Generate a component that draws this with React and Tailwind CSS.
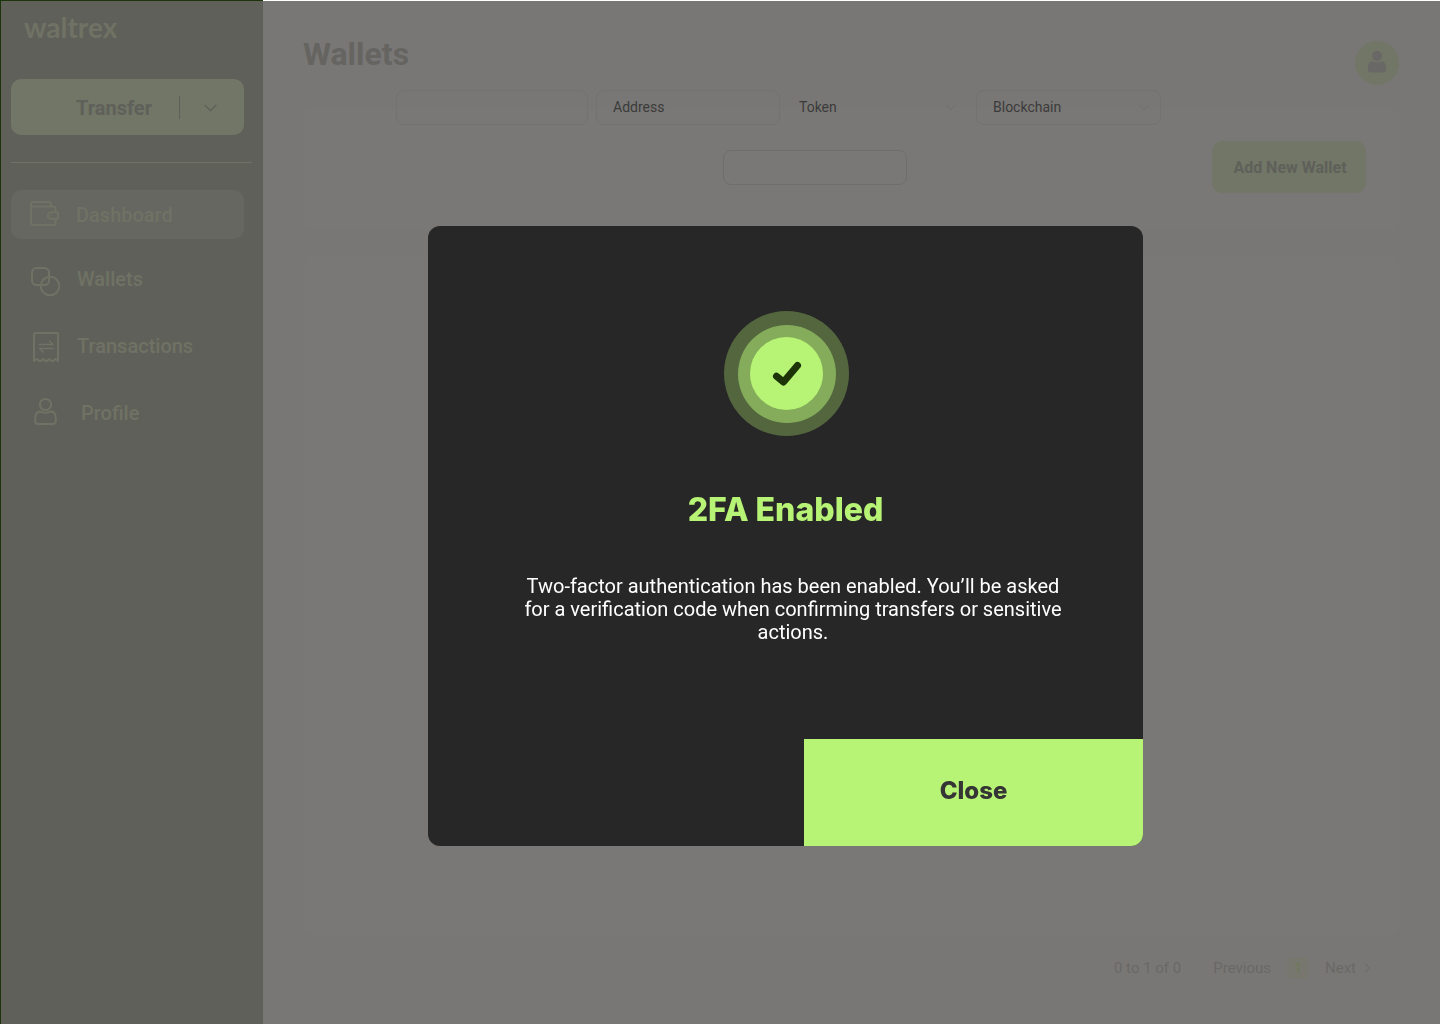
import React from "react";

function WalletIcon() {
  return (
    <svg className="size-8 shrink-0" viewBox="0 0 32 32" fill="none" stroke="currentColor" strokeWidth="2" strokeLinecap="round" strokeLinejoin="round" aria-hidden="true">
      <path d="M22 7V4.5A1.5 1.5 0 0 0 20.500 3H3.500A1.5 1.5 0 0 0 2 4.500V24.500A1.5 1.5 0 0 0 3.500 26H25A1.5 1.5 0 0 0 26.500 24.500V20M26.500 13V9A1.5 1.5 0 0 0 25 7.500H2.500" />
      <path d="M22 13.300H28A1 1 0 0 1 29 14.300V18.700A1 1 0 0 1 28 19.700H22A3.2 3.2 0 0 1 22 13.300Z" />
      <path d="M22 16.500h.1" />
    </svg>
  );
}

function ShapesIcon() {
  return (
    <svg className="size-8 shrink-0 overflow-visible" viewBox="0 0 32 32" fill="none" stroke="currentColor" strokeWidth="2" aria-hidden="true">
      <rect x="3" y="5" width="17" height="17" rx="4.5" />
      <circle cx="21" cy="23" r="9.3" />
    </svg>
  );
}

function ReceiptIcon() {
  return (
    <svg className="size-8 shrink-0 overflow-visible" viewBox="0 0 32 32" fill="none" stroke="currentColor" strokeWidth="2" strokeLinecap="round" strokeLinejoin="round" aria-hidden="true">
      <path d="M5 31V4A1 1 0 0 1 6 3H28A1 1 0 0 1 29 4V31L26.5 29L23.3 31.500L20.3 29L17.2 31.500L14.2 29L11.2 31.500L8 29Z" />
      <path strokeWidth="1.5" d="M10.5 14.500H24L20.500 11M24 18.500H10.500L14 22" />
    </svg>
  );
}

function PersonIcon() {
  return (
    <svg className="size-8 shrink-0" viewBox="0 0 32 32" fill="none" stroke="currentColor" strokeWidth="2" strokeLinejoin="round" aria-hidden="true">
      <circle cx="16.5" cy="7.5" r="5.6" />
      <path d="M11 14.500C7.500 14.700 6.200 18 6.200 21.500V24A3 3 0 0 0 9.200 27H23.800A3 3 0 0 0 26.800 24V21.500C26.800 18 25.500 14.700 22 14.500C20.500 14.500 19.500 15.700 16.500 15.700S12.500 14.500 11 14.500Z" />
    </svg>
  );
}

function Chevron({ className }) {
  return (
    <svg className={className} viewBox="0 0 12 12" fill="none" stroke="currentColor" strokeWidth="1.2" strokeLinecap="round" strokeLinejoin="round" aria-hidden="true">
      <path d="M1 4L6 9L11 4" />
    </svg>
  );
}

function Sidebar() {
  return (
    <aside className="w-[263px] shrink-0 border-t border-l border-[#1d3409] bg-[#5f6059] pl-[10px] text-[#6f7264]">
      <div className="pt-2 pl-[13px] font-['Lato'] text-[28px] leading-9 font-bold">waltrex</div>
      <div className="mt-[34px] flex h-14 w-[233px] items-center rounded-[10px] bg-[#717667] text-[#5f6059]">
        <button type="button" className="h-full flex-1 pt-0.5 pl-[38px] text-xl font-bold">Transfer</button>
        <span className="h-[23px] w-px bg-[#5f6059]" />
        <button type="button" aria-label="More transfer options" className="flex h-full w-16 items-center pl-6">
          <Chevron className="size-[13px]" />
        </button>
      </div>
      <hr className="mt-[27px] mr-[11px] border-[#6f7264]" />
      <nav className="mt-[27px] w-[233px] text-xl font-medium">
        <a href="#dashboard" className="flex h-[49px] items-center gap-[15px] rounded-[10px] bg-[#666761] pl-[18px]">
          <WalletIcon />
          Dashboard
        </a>
        <div className="mt-[14px] flex flex-col gap-4">
          <a href="#wallets" className="flex h-[51px] items-center gap-4 pl-[18px]">
            <ShapesIcon />
            Wallets
          </a>
          <a href="#transactions" className="flex h-[51px] items-center gap-4 pl-[18px]">
            <ReceiptIcon />
            Transactions
          </a>
          <a href="#profile" className="flex h-[51px] items-center gap-5 pl-[18px]">
            <PersonIcon />
            Profile
          </a>
        </div>
      </nav>
    </aside>
  );
}

function Filters() {
  return (
    <section className="h-[123px] rounded-xl bg-[#7a7876] text-sm text-[#3b3b3b]">
      <div className="-mt-[17px] flex justify-center gap-2 pr-[146px]">
        <input aria-label="Wallet name" className="h-[35px] w-48 rounded-lg border border-[#747270] px-4 outline-none" />
        <input aria-label="Address" placeholder="Address" className="h-[35px] w-[184px] rounded-lg border border-[#747270] px-4 pb-0.5 outline-none placeholder:text-[#3b3b3b]" />
        <div className="relative w-[180px]">
          <select aria-label="Token" className="h-[35px] w-full appearance-none px-[11px] pb-0.5 outline-none">
            <option>Token</option>
          </select>
          <Chevron className="pointer-events-none absolute top-3 right-3 size-2.5 text-[#6f6e6c]" />
        </div>
        <div className="relative w-[185px]">
          <select aria-label="Blockchain" className="h-[35px] w-full appearance-none rounded-lg border border-[#747270] px-4 pb-0.5 outline-none">
            <option>Blockchain</option>
          </select>
          <Chevron className="pointer-events-none absolute top-3 right-3 size-2.5 text-[#6f6e6c]" />
        </div>
      </div>
      <div className="mt-4 flex items-center justify-between pr-[34px] pl-[420px]">
        <input aria-label="Search wallets" className="h-[35px] w-[184px] rounded-lg border border-[#6f6e6c] px-4 outline-none" />
        <button type="button" className="h-[52px] w-[154px] rounded-[10px] bg-[#717667] pt-0.5 pl-0.5 text-base font-bold text-[#5f6059]">
          Add New Wallet
        </button>
      </div>
    </section>
  );
}

function Pagination() {
  return (
    <footer className="flex h-[89px] items-center justify-end pr-7 pb-[23px] text-[15px] text-[#696866]">
      <span>0 to 1 of 0</span>
      <button type="button" className="ml-8">Previous</button>
      <button type="button" aria-current="page" className="ml-4 size-[22px] rounded-md bg-[#777770] text-[#6c7a57]">1</button>
      <button type="button" className="ml-4 flex items-center gap-1.5">
        Next
        <Chevron className="size-2.5 -rotate-90" />
      </button>
    </footer>
  );
}

function Dialog() {
  return (
    <div className="fixed inset-0 flex items-center justify-center pt-12 pl-[131px]">
      <div role="dialog" aria-modal="true" aria-labelledby="dialog-title" className="flex w-[715px] flex-col items-center overflow-hidden rounded-xl bg-[#272727] pt-[85px]">
        <svg className="ml-0.5 size-[125px]" viewBox="0 0 125 125" aria-hidden="true">
          <circle cx="62.5" cy="62.5" r="62.5" fill="#53663e" />
          <circle cx="63" cy="63" r="49" fill="#85ac5b" />
          <circle cx="62.5" cy="62.5" r="36.5" fill="#b7f475" />
          <path d="M52.5 65.3L59.5 71L73.5 54.5" fill="none" stroke="#1d3409" strokeWidth="7" strokeLinecap="round" strokeLinejoin="round" />
        </svg>
        <h2 id="dialog-title" className="mt-[54px] font-['Inter'] text-[32px] leading-10 font-extrabold text-[#b7f475]">2FA Enabled</h2>
        <p className="mt-[45px] mr-[70px] w-[560px] self-end text-center text-xl leading-[23px] text-white">
          Two-factor authentication has been enabled. You’ll be asked for a verification code when confirming transfers or sensitive actions.
        </p>
        <button type="button" className="mt-[95px] h-[107px] w-[339px] self-end bg-[#b7f475] pb-1 font-['Inter'] text-2xl font-extrabold text-[#353535]">
          Close
        </button>
      </div>
    </div>
  );
}

export default function App() {
  return (
    <div className="flex min-h-screen font-['Roboto',sans-serif]">
      <Sidebar />
      <main className="flex flex-1 flex-col border-t border-white bg-[#797775] px-10 pt-[33px]">
        <header className="flex items-start justify-between">
          <h1 className="text-[32px] leading-10 font-bold text-[#656461]">Wallets</h1>
          <button type="button" aria-label="Account" className="mt-[7px] mr-px flex size-11 justify-center rounded-full bg-[#717667] pt-2.5 text-[#696866]">
            <svg className="h-[22px] w-[18px]" viewBox="0 0 18 22" fill="currentColor" aria-hidden="true">
              <circle cx="9" cy="5" r="5" />
              <path d="M4 10.5C1.5 10.5 0 13 0 16V18.5A3 3 0 0 0 3 21.5H15A3 3 0 0 0 18 18.5V16C18 13 16.5 10.5 14 10.5C12.5 10.5 11.5 11.5 9 11.5S5.5 10.5 4 10.5Z" />
            </svg>
          </button>
        </header>
        <div className="mt-[22px] flex flex-1 flex-col">
          <Filters />
          <section aria-label="Wallet list" className="mt-[25px] flex-1 rounded-xl bg-[#7a7876]" />
        </div>
        <Pagination />
      </main>
      <Dialog />
    </div>
  );
}
